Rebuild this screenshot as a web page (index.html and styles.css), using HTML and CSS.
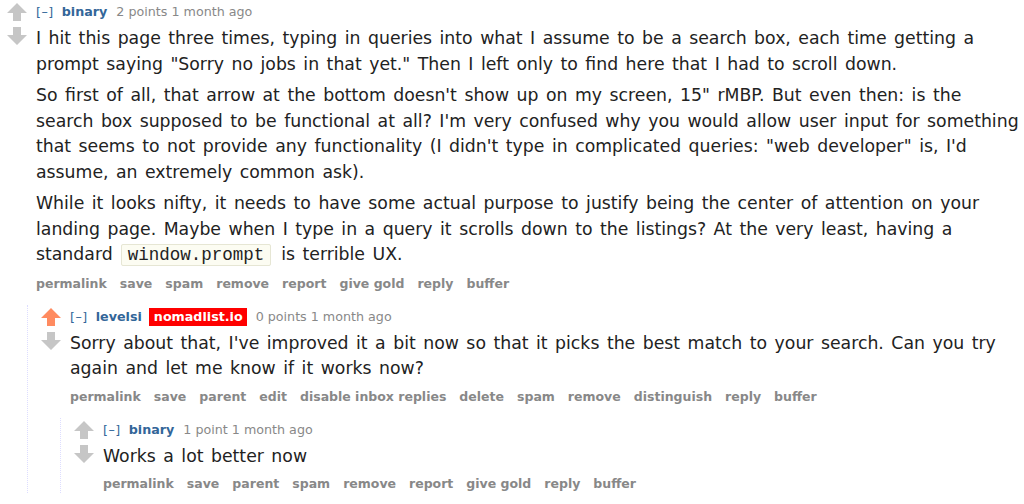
FILE: index.html
```html
<!DOCTYPE html>
<html>
<head>
<meta charset="utf-8">
<link rel="stylesheet" href="styles.css">
</head>
<body>
<div class="comment top">
  <div class="midcol">
    <svg class="arrow" viewBox="0 0 20 18"><path d="M10 0 L20 10 H14 V18 H6 V10 H0 Z" fill="#c6c6c6"/></svg>
    <svg class="arrow" viewBox="0 0 20 18"><path d="M10 18 L20 8 H14 V0 H6 V8 H0 Z" fill="#c6c6c6"/></svg>
  </div>
  <div class="entry">
    <p class="tagline"><span class="expand">[–]</span><span class="author">binary</span><span class="score">2 points 1 month ago</span></p>
    <div class="md">
      <p>I hit this page three times, typing in queries into what I assume to be a search box, each time getting a prompt saying "Sorry no jobs in that yet." Then I left only to find here that I had to scroll down.</p>
      <p>So first of all, that arrow at the bottom doesn't show up on my screen, 15" rMBP. But even then: is the search box supposed to be functional at all? I'm very confused why you would allow user input for something that seems to not provide any functionality (I didn't type in complicated queries: "web developer" is, I'd assume, an extremely common ask).</p>
      <p>While it looks nifty, it needs to have some actual purpose to justify being the center of attention on your landing page. Maybe when I type in a query it scrolls down to the listings? At the very least, having a standard<code>window.prompt</code>is terrible UX.</p>
    </div>
    <ul class="buttons"><li>permalink</li><li>save</li><li>spam</li><li>remove</li><li>report</li><li>give gold</li><li>reply</li><li>buffer</li></ul>
  </div>
</div>
<div class="child lvl1">
  <div class="comment">
    <div class="midcol">
      <svg class="arrow" viewBox="0 0 20 18"><path d="M10 0 L20 10 H14 V18 H6 V10 H0 Z" fill="#ff8b60"/></svg>
      <svg class="arrow" viewBox="0 0 20 18"><path d="M10 18 L20 8 H14 V0 H6 V8 H0 Z" fill="#c6c6c6"/></svg>
    </div>
    <div class="entry">
      <p class="tagline"><span class="expand">[–]</span><span class="author">levelsi</span><span class="flair">nomadlist.io</span><span class="score">0 points 1 month ago</span></p>
      <div class="md">
        <p>Sorry about that, I've improved it a bit now so that it picks the best match to your search. Can you try again and let me know if it works now?</p>
      </div>
      <ul class="buttons"><li>permalink</li><li>save</li><li>parent</li><li>edit</li><li>disable inbox replies</li><li>delete</li><li>spam</li><li>remove</li><li>distinguish</li><li>reply</li><li>buffer</li></ul>
    </div>
  </div>
  <div class="child lvl2">
    <div class="comment">
      <div class="midcol">
        <svg class="arrow" viewBox="0 0 20 18"><path d="M10 0 L20 10 H14 V18 H6 V10 H0 Z" fill="#c6c6c6"/></svg>
        <svg class="arrow" viewBox="0 0 20 18"><path d="M10 18 L20 8 H14 V0 H6 V8 H0 Z" fill="#c6c6c6"/></svg>
      </div>
      <div class="entry">
        <p class="tagline"><span class="expand">[–]</span><span class="author">binary</span><span class="score">1 point 1 month ago</span></p>
        <div class="md">
          <p>Works a lot better now</p>
        </div>
        <ul class="buttons"><li>permalink</li><li>save</li><li>parent</li><li>spam</li><li>remove</li><li>report</li><li>give gold</li><li>reply</li><li>buffer</li></ul>
      </div>
    </div>
  </div>
</div>
</body>
</html>
```

FILE: styles.css
```css
html, body {
  margin: 0;
  padding: 0;
  background: #ffffff;
  overflow: hidden;
}
body {
  font-family: "DejaVu Sans", Verdana, sans-serif;
  color: #222222;
}
.comment {
  display: flex;
  align-items: flex-start;
}
.top {
  padding-left: 7px;
}
.midcol {
  width: 29px;
  flex: none;
  display: flex;
  flex-direction: column;
  gap: 6px;
  padding-top: 3px;
}
.arrow {
  width: 20px;
  height: 18px;
  display: block;
}
.entry {
  flex: 1;
  min-width: 0;
}
.tagline {
  margin: 3px 0 0;
  font-size: 12.7px;
  line-height: 18px;
  color: #888888;
  white-space: nowrap;
}
.expand {
  color: #369;
  letter-spacing: 0.5px;
  margin-right: 8px;
}
.author {
  color: #369;
  font-weight: bold;
  margin-right: 9px;
}
.flair {
  background: #ff0000;
  color: #ffffff;
  font-weight: bold;
  padding: 1px 4px 2px 5px;
  margin-left: -2px;
  margin-right: 9px;
}
.md {
  font-size: 17.3px;
  word-spacing: 2px;
  line-height: 25.5px;
  margin-top: 5px;
}
.md p {
  margin: 0 0 6px;
}
code {
  font-family: "Liberation Mono", "Courier New", monospace;
  font-size: 17.5px;
  word-spacing: 0;
  background: #fcfcf2;
  border: 1px solid #e6e6d4;
  border-radius: 2px;
  padding: 0 6px;
  margin: 0 10px 0 8px;
}
.buttons {
  list-style: none;
  margin: 0;
  padding: 0;
  display: flex;
  gap: 13px;
  font-size: 12.5px;
  line-height: 18px;
  font-weight: bold;
  color: #888888;
  white-space: nowrap;
}
.child {
  border-left: 1px dotted #ddf;
  margin-top: 12px;
  padding-left: 13px;
}
.lvl1 {
  margin-left: 27px;
}
.lvl2 {
  margin-left: 19px;
}
```
